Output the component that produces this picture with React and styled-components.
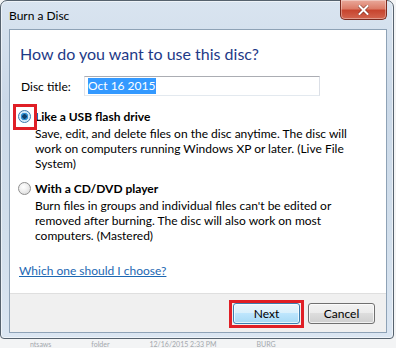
import React from "react";
import styled, { createGlobalStyle } from "styled-components";

const GlobalStyle = createGlobalStyle`
  html, body {
    margin: 0;
    padding: 0;
  }
  body {
    width: 396px;
    height: 348px;
    overflow: hidden;
    background: #f3f4f5;
    font-family: Lato, "Noto Sans", sans-serif;
  }
`;

const Desktop = styled.div`
  width: 396px;
  height: 348px;
  display: flex;
  flex-direction: column;
  overflow: hidden;
`;

const Window = styled.div`
  width: 394px;
  height: 339px;
  flex: none;
  box-sizing: border-box;
  border: 1px solid #56626e;
  border-radius: 7px 7px 4px 4px;
  background: linear-gradient(
    180deg,
    #d9e4f0 0%,
    #cbd9e8 30%,
    #d2dfec 70%,
    #dbe6f2 100%
  );
  box-shadow: inset 0 0 0 1px rgba(255, 255, 255, 0.55);
  display: flex;
  flex-direction: column;
  padding: 0 6px 5px 8px;
`;

const TitleBar = styled.div`
  height: 28px;
  flex: none;
  display: flex;
  justify-content: space-between;
  align-items: flex-start;
`;

const Caption = styled.span`
  padding-top: 7px;
  font-size: 12px;
  line-height: 16px;
  color: #000;
`;

const CloseButton = styled.div`
  width: 47px;
  height: 20px;
  margin-top: -1px;
  box-sizing: border-box;
  border: 1px solid #7a2a1f;
  border-top: none;
  border-radius: 0 0 5px 5px;
  background: linear-gradient(
    180deg,
    #e9a99b 0%,
    #dc7c68 45%,
    #c7452f 55%,
    #d3654f 100%
  );
  box-shadow: inset 0 0 0 1px rgba(255, 255, 255, 0.35);
  display: flex;
  align-items: center;
  justify-content: center;
`;

const Client = styled.div`
  flex: 1;
  display: flex;
  flex-direction: column;
  background: #fff;
  border: 1px solid #8ea2b6;
`;

const Body = styled.div`
  flex: 1;
  padding: 13px 11px 0 10px;
  box-sizing: border-box;
`;

const Heading = styled.h1`
  margin: 0;
  font-size: 16px;
  line-height: 21px;
  font-weight: normal;
  color: #1e3a87;
`;

const FieldRow = styled.div`
  display: flex;
  align-items: center;
  margin-top: 12px;
  margin-left: 1px;
`;

const FieldLabel = styled.span`
  width: 63px;
  font-size: 12px;
  line-height: 15px;
  color: #000;
`;

const TextBox = styled.div`
  width: 236px;
  height: 20px;
  box-sizing: border-box;
  border: 1px solid;
  border-color: #abadb3 #dbdfe6 #e3e9ef #e2e3ea;
  padding: 1px 0 0 3px;
  font-size: 12px;
  line-height: 16px;
`;

const Selected = styled.span`
  background: #3399ff;
  color: #fff;
  padding: 0 1px 1px 0;
`;

const Options = styled.div`
  margin-top: 13px;
  margin-left: -2px;
  display: flex;
  flex-direction: column;
  gap: 10px;
`;

const Option = styled.div`
  display: grid;
  grid-template-columns: 17px 1fr;
`;

const RadioCell = styled.div`
  height: 15px;
  display: flex;
  align-items: center;
`;

const Radio = styled.span`
  position: relative;
  width: 13px;
  height: 13px;
  box-sizing: border-box;
  border-radius: 50%;
  border: 1px solid ${(p) => (p.checked ? "#3d7bad" : "#8f8f8f")};
  background: ${(p) =>
    p.checked
      ? "radial-gradient(circle, #0f3f69 0 2px, #2f8fd0 2.5px 3.5px, #cfe8f8 4px, #eaf6fd 100%)"
      : "radial-gradient(circle at 40% 35%, #ffffff 0%, #f1f1f1 40%, #d4d4d4 100%)"};

  &::after {
    content: "";
    display: ${(p) => (p.marked ? "block" : "none")};
    position: absolute;
    left: -6px;
    top: -7px;
    right: -7px;
    bottom: -8px;
    border: 3px solid #e01f26;
  }
`;

const OptionTitle = styled.div`
  font-size: 12px;
  line-height: 15px;
  font-weight: bold;
  color: #000;
`;

const OptionText = styled.p`
  grid-column: 2;
  margin: 2px 0 0;
  width: 320px;
  font-size: 12px;
  line-height: 15px;
  color: #000;
`;

const HelpLink = styled.a`
  display: inline-block;
  margin-top: 20px;
  margin-left: -1px;
  font-size: 12px;
  line-height: 15px;
  color: #1d68b3;
  text-decoration: underline;
`;

const Footer = styled.div`
  height: 39px;
  flex: none;
  box-sizing: border-box;
  border-top: 1px solid #dfdfdf;
  background: #f0f0f0;
  display: flex;
  justify-content: flex-end;
  align-items: flex-start;
  gap: 8px;
  padding: 9px 11px 0 0;
`;

const Button = styled.button`
  position: relative;
  width: 67px;
  height: 21px;
  box-sizing: border-box;
  padding: 0;
  border: 1px solid ${(p) => (p.primary ? "#3c7fb1" : "#707070")};
  border-radius: 3px;
  background: ${(p) =>
    p.primary
      ? "linear-gradient(180deg, #eaf6fd 0%, #d9f0fc 50%, #bee6fd 50%, #a7d9f5 100%)"
      : "linear-gradient(180deg, #f2f2f2 0%, #ebebeb 50%, #dddddd 50%, #cfcfcf 100%)"};
  box-shadow: inset 0 0 0 1px rgba(255, 255, 255, 0.7);
  font-family: inherit;
  font-size: 12px;
  color: #000;

  &::after {
    content: "";
    display: ${(p) => (p.marked ? "block" : "none")};
    position: absolute;
    left: -5px;
    top: -4px;
    right: -5px;
    bottom: -5px;
    border: 3px solid #e01f26;
  }
`;

const Behind = styled.div`
  flex: 1;
  display: flex;
  align-items: flex-start;
  gap: 40px;
  padding: 1px 0 0 30px;
  font-size: 7px;
  line-height: 8px;
  color: #a3a8ad;
  white-space: nowrap;
`;

export default function App() {
  return (
    <>
      <GlobalStyle />
      <Desktop>
        <Window>
          <TitleBar>
            <Caption>Burn a Disc</Caption>
            <CloseButton>
              <svg width="11" height="10" viewBox="0 0 11 10">
                <path
                  d="M1.5 1 L9.5 9 M9.5 1 L1.5 9"
                  stroke="#5a1a12"
                  strokeWidth="3.4"
                  strokeLinecap="square"
                  opacity="0.55"
                />
                <path
                  d="M1.5 1 L9.5 9 M9.5 1 L1.5 9"
                  stroke="#fff"
                  strokeWidth="2"
                  strokeLinecap="square"
                />
              </svg>
            </CloseButton>
          </TitleBar>
          <Client>
            <Body>
              <Heading>How do you want to use this disc?</Heading>
              <FieldRow>
                <FieldLabel>Disc title:</FieldLabel>
                <TextBox>
                  <Selected>Oct 16 2015</Selected>
                </TextBox>
              </FieldRow>
              <Options>
                <Option>
                  <RadioCell>
                    <Radio checked marked />
                  </RadioCell>
                  <OptionTitle>Like a USB flash drive</OptionTitle>
                  <OptionText>
                    Save, edit, and delete files on the disc anytime. The disc
                    will work on computers running Windows XP or later. (Live
                    File System)
                  </OptionText>
                </Option>
                <Option>
                  <RadioCell>
                    <Radio />
                  </RadioCell>
                  <OptionTitle>With a CD/DVD player</OptionTitle>
                  <OptionText>
                    Burn files in groups and individual files can't be edited
                    or removed after burning. The disc will also work on most
                    computers. (Mastered)
                  </OptionText>
                </Option>
              </Options>
              <HelpLink href="#">Which one should I choose?</HelpLink>
            </Body>
            <Footer>
              <Button primary marked>
                Next
              </Button>
              <Button>Cancel</Button>
            </Footer>
          </Client>
        </Window>
        <Behind>
          <span>ntsaws</span>
          <span>folder</span>
          <span>12/16/2015 2:33 PM</span>
          <span>BURG</span>
        </Behind>
      </Desktop>
    </>
  );
}
